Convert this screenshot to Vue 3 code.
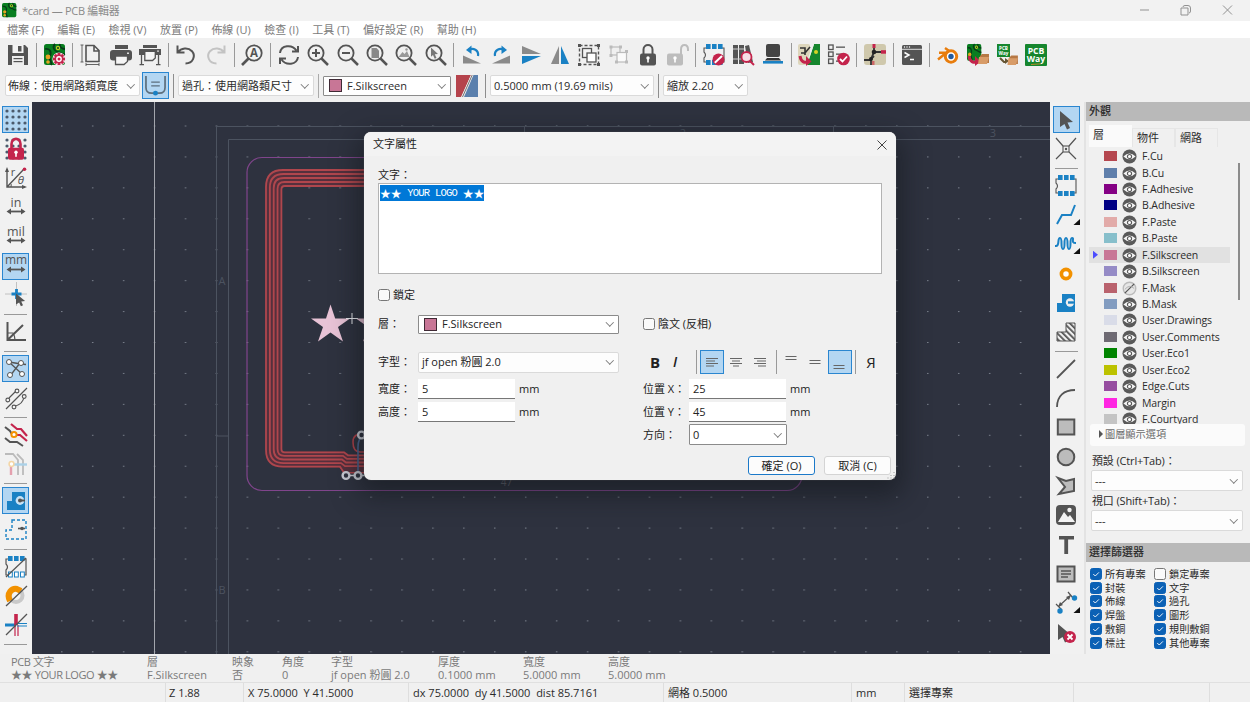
<script setup>
const D = '#545454', B = '#1a81c4', R = '#c4244c', O = '#f29100', G = '#16862e'
const ln = (d, c = D, w = 2, extra = '') => `<path d="${d}" fill="none" stroke="${c}" stroke-width="${w}" ${extra}/>`
const fl = (d, c = D) => `<path d="${d}" fill="${c}"/>`
const rc = (x, y, w, h, c = D, extra = '') => `<rect x="${x}" y="${y}" width="${w}" height="${h}" fill="${c}" ${extra}/>`
const ci = (x, y, r, c = D, extra = '') => `<circle cx="${x}" cy="${y}" r="${r}" fill="${c}" ${extra}/>`
const tx = (x, y, s, t, c = D, extra = '') => `<text x="${x}" y="${y}" font-size="${s}" fill="${c}" text-anchor="middle" ${extra}>${t}</text>`

const board =
  rc(0, 0, 21, 21, '#087e20', 'rx="2.5"') +
  ln('M1 5C5 4 8 7 6 12S9 17 7 21M11 0C8 3 10 7 14 8S18 11 21 10M16 0C15 3 18 5 21 5', '#083b18', 1.8) +
  ci(4, 13, 2.4, '#e5a321') + ci(4, 18, 1.8, '#e5a321') + ci(14, 4, 2.2, '#bccf25') + ci(14, 4, 1, '#083b18')
const lens = ci(9, 9, 7.6, 'none', `stroke="${D}" stroke-width="1.8"`) + ln('M14.5 14.5L21 21', D, 2.5)
const ban = ci(15.5, 15.5, 6, R) + ln('M11.8 18.8L19 12', '#fff', 2)
const pads = (x, y, c = B) => rc(x, y, 4.6, 5, c) + rc(x + 6, y, 4.6, 5, c) + rc(x + 12, y, 4.6, 5, c)
const hollow = (x, y) => [0, 6, 12].map(i => rc(x + i + .5, y + .5, 3.8, 5, '#fff', `stroke="${B}"`)).join('')
const footprint = ln('M3 4H1V8Q4 11 1 14V18H3M19 4H21V18H19', D, 1.1) + pads(3, 0) + pads(3, 16)
const folder = fl('M13 12L15 10H22V19H12Z', '#b67844') + fl('M12 13H22L20 20H11Z', '#d89c68')
const redArrow = ln('M2 12C3 18 6 19 11 18', R, 3) + fl('M8 12L13.500 17.500L8 22Z', R)
const poly = 'M7 1H21V20H1V11H7Z'
const arrows = (y) => ln(`M4 ${y}H18`, D, 1.8) + fl(`M1.500 ${y}L6 ${y - 3}V${y + 3}ZM20.500 ${y}L16 ${y - 3}V${y + 3}Z`)
const dots = [2, 8, 14, 20].flatMap(x => [2, 8, 14, 20].map(y => ci(x, y, 1.6, '#4b5a6c'))).join('')
const lockBody = (c) => rc(3, 9.5, 16, 12, c, 'rx="2"') + ci(11, 14, 1.7, '#fff') + rc(10.2, 14, 1.6, 4.5, '#fff')
const pointer = 'M5 2L18 13L12.5 13.5L15 19L12 20.5L9.5 15L5 18Z'
const corner = fl('M25 15V21H18.500Z', '#111')
const teeth = [0, 45, 90, 135].map(a => `<rect x="13.600" y="9" width="2.800" height="12" fill="${R}" transform="rotate(${a} 15 15)"/>`).join('')

const icons = {
  save: fl('M1 1H18L21 4V21H1Z') + rc(5.5, 1, 11, 8, '#f4f4f4') + rc(11, 2, 3.5, 5.5) + rc(5, 12, 12, 9, '#eee') + rc(6.5, 14, 9, 1.2) + rc(6.5, 17, 9, 1.2),
  setup: board + ci(15, 15, 6.6, '#f3e4e8') + teeth + ci(15, 15, 4.4, R) + ci(15, 15, 2.9, '#fff') + ci(15, 15, 1.5, R),
  page: ln('M6 1.5H14L19 6.5V17.5H6ZM14 1.5V7H19', D, 1.6) + ln('M2 1V18M.5 1H3.5M.5 18H3.5M6 20.5H19M6 19V22M19 19V22', D, .9),
  print: rc(5, 1, 13, 4) + rc(0, 6, 22, 10.5, D, 'rx="3"') + fl('M5 12H17V18L14 21H5Z', '#f5f5f5') + ln('M5.5 12H17.5V17.5L14 20.5H5.5Z', D, 1.3) + rc(17, 8.5, 2, 1.5, '#ddd'),
  plot: rc(4, 1, 14, 3) + rc(0, 5, 22, 6) + fl('M6 8H16V14L13.5 16.5H6Z', '#f5f5f5') + ln('M5.8 8V16.5H13.5L16.3 14V8M2.5 10V21M19.5 10V21M.5 20.7H5M17 20.7H21.5', D, 1.3) + rc(18, 6.5, 2, 1.2, '#ddd'),
  undo: ln('M2.500 1.500V8.500H9.500M3 8.200C6 4 13 3 17 7.2C21 12 18 19.5 10.5 19.500', D, 2),
  redo: ln('M19.500 1.500V8.500H12.500M19 8.200C16 4 9 3 5 7.2C1 12 4 19.5 11.5 19.500', '#c3c3c3', 2),
  find: ci(13, 9, 7.7, '#f4f4f4', `stroke="${D}" stroke-width="1.8"`) + ln('M7.5 14.5L1 21', D, 2.6) + tx(13, 13.2, 11.5, 'A', D, 'font-weight="700"'),
  refresh: ln('M2 9C3 1 14 0 18.5 6.5M20 2V7.5H14M20 13C19 21 8 22 3.5 15.5M2 20V14.5H8', D, 2),
  zin: lens + ln('M5 9H13M9 5V13', D, 2),
  zout: lens + ln('M5 9H13', D, 2),
  zfit: lens + fl('M5.5 4H10.5L13 6.5V14H5.5Z', '#898989'),
  zobj: lens + fl('M3.5 13L7.5 8L9.5 10L12 7L14.5 13Z', '#999') + ci(11.5, 5.5, 1.2, '#999'),
  zsel: lens + fl('M6 3.5L13 10L9.8 10.3L11.5 14L9.7 14.7L8 11L6 12.7Z', '#777'),
  rotl: fl('M2 11.500L20 19.5H2Z', '#8a8a8a') + ln('M17 12C18 6 12 3.500 8 6', B, 2.2) + fl('M5 6L10.500 1.500V10Z', B),
  rotr: fl('M20 11.500L2 19.5H20Z', '#8a8a8a') + ln('M5 12C4 6 10 3.500 14 6', B, 2.2) + fl('M17 6L11.500 1.500V10Z', B),
  flipv: fl('M2 2L21 10H2Z', '#8a8a8a') + fl('M2 12H21L2 20Z', B),
  fliph: fl('M10 2V20H2Z', '#8a8a8a') + fl('M12 2L20 20H12Z', B),
  group: rc(1.5, 1.5, 19, 19, 'none', `stroke="${D}" stroke-width="1.4" stroke-dasharray="3 2"`) + rc(0, 0, 3, 3) + rc(19, 0, 3, 3) + rc(0, 19, 3, 3) + rc(19, 19, 3, 3) + rc(4.5, 4.5, 9, 9, '#f4f4f4', `stroke="${D}" stroke-width="1.3"`) + rc(9, 9, 9, 9, '#fff', `stroke="${D}" stroke-width="1.3"`),
  ungroup: rc(3, 3, 9, 8, 'none', 'stroke="#bbb" stroke-width="1.2"') + rc(9, 8.5, 9.5, 9.5, '#fafafa', 'stroke="#bbb" stroke-width="1.2"') + rc(1.5, 1.5, 3, 3, '#bbb') + rc(11, 1.5, 3, 3, '#bbb') + rc(17, 16.5, 3, 3, '#bbb') + rc(1.5, 10, 3, 3, '#bbb') + rc(17, 6, 3, 3, '#bbb') + rc(7, 16.5, 3, 3, '#bbb'),
  lock: ln('M6.5 10V5.5C6.5 -.5 15.5 -.5 15.5 5.5V10', D, 2) + lockBody(D),
  unlock: ln('M14 10V5.5C14 -.5 21 -.5 21 5.5V7', '#bcbcbc', 2) + `<g transform="translate(-3 0)">${lockBody('#bcbcbc')}</g>`,
  fpedit: footprint + ban,
  fplib: rc(1, 1, 5, 19) + rc(7, 1, 5, 19) + fl('M13 2L17 1L21 18L16 19Z') + ln('M1 5H12M1 15H12', '#ccc', 1) + ci(14.5, 13, 5, '#f6dfe5', `stroke="${R}" stroke-width="1.8"`) + ln('M18 17L22 21', R, 2),
  chip: rc(4, 0, 14, 13, '#444', 'rx="2"') + fl('M5 14H17L19 16.500H3Z', '#333') + rc(1, 17, 20, 2.6, B),
  update: rc(0, 0, 12, 21, '#ddd6bc', 'rx="2"') + fl('M16 0H22V21H9Z', G) + ln('M15.500 0L8.500 21', '#eee', 1.2) + ln('M2 4H7V11M3 9H7L12 3', '#333', 1.6) + ci(18, 8, 2, '#d6d324') + redArrow,
  drc: [1, 8, 15].map(y => rc(.6, y, 4.5, 4.5, 'none', `stroke="${D}" stroke-width="1.3"`) + rc(8, y + 1.5, 9, 1.3)).join('') + ci(15.5, 15, 6.3, R) + ln('M12 15L14.5 17.5L19 12.5', '#fff', 1.8),
  ratsnest: rc(0, 0, 22, 21, '#cfc8ac', 'rx="3"') + ln('M10 0V8L7 15V21M10 8H22M0 16H7M7 15L10 12', '#333', 1.8) + ci(10, 8, 2.3, '#222') + ci(7, 15, 2, '#222') + rc(8.5, 0, 3, 4, R) + rc(17, 6.2, 5, 3.5, R) + rc(8, 17, 2.5, 4, '#c66'),
  console: rc(1, 1, 20, 20, D, 'rx="1.5"') + rc(1, 4.8, 20, 1, '#ddd') + ci(3.5, 3, .7, '#fff') + ci(6, 3, .7, '#fff') + ci(8.5, 3, .7, '#fff') + ln('M3.5 8.5L8 11L3.5 13.5M9 15.5H13', '#fff', 1.5),
  blender: ln('M1 15.5L12 6.5M2 8.8H12M8 4L15 9', '#e87d0d', 2.4) + ci(14, 12.5, 5.7, '#fff', 'stroke="#e87d0d" stroke-width="3"') + ci(14, 12.5, 2.7, '#215a9e'),
  bundle: `<g transform="scale(.68 .8)">${board}</g>` + redArrow + folder,
  wayfolder: rc(1, 0, 13, 13, G) + tx(7.5, 5.6, 4.6, 'PCB', '#fff', 'font-weight="700"') + tx(7.5, 10.8, 4.6, 'Way', '#fff', 'font-weight="700"') + ln('M4 14L8 18H10', '#653', 2) + fl('M9 14L13 17L9 20Z', '#653') + `<g transform="translate(1 2) scale(.95)">${folder}</g>`,
  way: rc(0, 0, 22, 22, G, 'rx="1"') + tx(11, 9.7, 8.6, 'PCB', '#fff', 'font-weight="700"') + tx(11, 17.9, 8.6, 'Way', '#fff', 'font-weight="700"') + ln('M6 20.5L16 19.8', '#df8a28', .8),

  grid: dots,
  gridlock: dots + ln('M6.5 10V6C6.5 -.8 15.5 -.8 15.5 6V10', R, 2.6) + `<g transform="translate(0 .3)">${lockBody(R)}</g>`,
  polar: ln('M2 2V20H20M2 20L19 2', D, 1.4) + fl('M0 5L2 0L4 5ZM17 18L22 20L17 22Z') + ci(19.5, 2.3, 1.8, R) + tx(8, 9, 11, 'r') + tx(16, 17, 11.5, 'θ', D, 'font-style="italic"') + ln('M6 20Q7 17 5 16', D, 1),
  inch: tx(11, 9.5, 12.5, 'in') + arrows(14.5),
  mil: tx(11, 9.5, 12.5, 'mil') + arrows(14.5),
  mm: tx(11, 9, 12, 'mm') + arrows(14.5),
  cursor: ln('M0 9H22M11.5 -3V21', '#b5b5b5', .8) + ln('M11.5 4V14M6.5 9H16.5', B, 2.8) + `<g transform="translate(7.500 7) scale(.7)">${fl(pointer)}</g>`,
  angle: ln('M2.5 1V19H21M2.5 19L18 4', D, 2) + ln('M3 12H8Q10 15 10 19', D, 1.2),
  rats: ln('M4 4L16 6L21 6.5M4 4L17 16M15 5L5 18', D, 1.3) + [[4, 4], [16, 5], [5, 17], [17, 16]].map(p => ci(p[0], p[1], 2.5, '#fff', `stroke="${D}"`)).join(''),
  curved: ln('M1 22L22 1M4 11L11 4M9.500 19.500Q18 17 19 10', D, 1.2) + [[2.8, 13], [12, 4], [9, 20], [19.2, 9.5]].map(p => ci(p[0], p[1], 1.9, '#f5f5f5', `stroke="${D}" stroke-width="1.1"`)).join(''),
  tracks: ln('M0 3L5 7L8 12M0 14L5 18H12L18 22', D, 2) + ln('M6 0L12 5H16L22 12M11 11H15L22 17', R, 2.2) + ci(9, 10.5, 2.6, '#fff', `stroke="${O}" stroke-width="2"`),
  trackdim: ln('M0 1H8L13 7V22M12 1L18 7V22', '#bbb', 1.8) + ln('M8 11.500H22', '#abd1e8', 2.4) + ln('M6 13V22', '#e4a0ae', 2.4) + ci(6.5, 11, 2.4, '#fff', 'stroke="#f4d6a5" stroke-width="1.5"'),
  zone: fl('M7 2H20V20H2V11H7Z', B) + ci(15, 10.5, 4.4, '#c8e2f5') + ln('M14 10.5H20', D, 2) + ci(15, 10.5, 2, D),
  zoneoutline: ln(poly, B, 1.4, 'stroke-dasharray="3 2"') + ln('M13 9.5H20', D, 1.6) + ci(17, 9.5, 1.8, D),
  fpoutline: ln('M3 3H1V8Q4 11 1 14V19H3M19 3H21V19H19', D, 1.2) + pads(3, 0) + hollow(3, 15.5) + ln('M1 21L21 2', D, 1.2),
  padfill: ci(11, 10.5, 6.5, 'none', 'stroke="#c9c9c9" stroke-width="4"') + ln('M5 16C1 8 7 3 12 4L16 6', O, 6) + ci(11, 10.5, 3, '#f4f4f4') + ln('M1 21L22 1', D, 1.3),
  trackfill: ln('M0 11H11', B, 3) + ln('M11 0V11', R, 3.6) + ln('M10 11V22M13 11V22', R, 1.2) + ln('M12 9.5H22M12 12H22', B, 1.2) + ln('M1 21L22 0', D, 1.2),

  select: fl(pointer),
  local: ln('M1 0L8 8M14 14L21 21M21 0L14 8M8 14L1 21', D, 1.2) + rc(8, 8, 6, 6, 'none', `stroke="${D}" stroke-width="1.1"`) + ci(11, 11, 1.2),
  footprint,
  route: ln('M2 20L7 11H16L20 1', B, 2) + corner,
  tune: ln('M0 13H1C5 13 2 5 5 5S5 16 8 16S8 5 11 5S11 16 14 16S14 5 17 5S15 10 21 10', B, 2) + corner,
  via: ci(11, 11, 4.6, '#fff', `stroke="${O}" stroke-width="3.7"`),
  fill: fl('M7 2H20V20H2V11H7Z', B) + ci(15, 10.5, 4.2, '#eee') + ln('M13 10.5H20', B, 2.4),
  keepout: `<defs><pattern id="hatch" width="4" height="4" patternUnits="userSpaceOnUse" patternTransform="rotate(-45)"><rect width="1.800" height="4" fill="${D}"/></pattern></defs><path d="M11 2H20V20H2V11H11Z" fill="url(#hatch)" stroke="${D}"/>`,
  line: ln('M2 20L20 2', D, 1.8),
  arc: ln('M2 20C2 9 9 3 20 3', D, 1.8),
  rect: rc(2.8, 3.5, 16.5, 15, '#bcbcbc', `stroke="${D}" stroke-width="2"`),
  circle: ci(11, 11, 8.3, '#bcbcbc', `stroke="${D}" stroke-width="2"`),
  polygon: `<path d="M3 3L11 6L19 4V16L4 19L10 12Z" fill="#bcbcbc" stroke="${D}" stroke-width="2"/>`,
  image: rc(1, 1, 20, 20, D, 'rx="4"') + fl('M3 18L9 8L13 13L15 11L20 18Z', '#f4f4f4') + ci(14.5, 6, 2.2, '#f4f4f4'),
  text: rc(4, 2, 15, 3.5) + rc(9.3, 2, 3.8, 18),
  textbox: rc(2.5, 3.5, 17, 15, '#bcbcbc', `stroke="${D}" stroke-width="2"`) + ln('M6 8H16M6 11H16M6 14H13', D, 1.4),
  dim: ln('M4 14L15 4M1 12L7 18M13 0L18 6', D, 1.2) + fl('M3 15L5 10L8 13ZM16 3L11 5L14 8Z') + ci(5, 19, 2.7, B) + ci(19.5, 6, 2.7, B) + corner,
  del: `<g transform="translate(-2 0)">${fl(pointer)}</g>` + ci(15, 15, 6, R) + ln('M12.5 12.5L17.5 17.5M17.5 12.5L12.5 17.5', '#fff', 1.8),
}

const menus = ['檔案 (F)', '編輯 (E)', '檢視 (V)', '放置 (P)', '佈線 (U)', '檢查 (I)', '工具 (T)', '偏好設定 (R)', '幫助 (H)']
const topTools = 'save | setup | page print plot | undo redo | find | refresh zin zout zfit zobj zsel | rotl rotr flipv fliph group ungroup lock unlock | fpedit fplib chip | update drc | ratsnest | console | blender bundle wayfolder way'.split(' ')
const leftTools = 'grid gridlock polar inch mil mm cursor | angle | rats curved | tracks trackdim | zone zoneoutline | fpoutline padfill trackfill |'.split(' ')
const rightTools = 'select local | footprint route tune via fill keepout | line arc rect circle polygon image text textbox dim del'.split(' ')
const active = ['grid', 'mm', 'rats', 'zone', 'select']

const layers = [
  ['F.Cu', '#b5474f'], ['B.Cu', '#5f7fab'], ['F.Adhesive', '#840084'], ['B.Adhesive', '#000084'],
  ['F.Paste', '#e2aba9'], ['B.Paste', '#87bfcb'], ['F.Silkscreen', '#c87696'], ['B.Silkscreen', '#958bc6'],
  ['F.Mask', '#b9626d'], ['B.Mask', '#829cc0'], ['User.Drawings', '#d9dce8'], ['User.Comments', '#6e6a73'],
  ['User.Eco1', '#008400'], ['User.Eco2', '#bcc200'], ['Edge.Cuts', '#964da0'], ['Margin', '#ff26e2'], ['F.Courtyard', '#c4c4c4'],
]
const filters = ['所有專案', '鎖定專案', '封裝', '文字', '佈線', '過孔', '焊盤', '圖形', '敷銅', '規則敷銅', '標註', '其他專案']
const info = [['PCB 文字', '★★ YOUR LOGO ★★'], ['層', 'F.Silkscreen'], ['映象', '否'], ['角度', '0'], ['字型', 'jf open 粉圓 2.0'], ['厚度', '0.1000 mm'], ['寬度', '5.0000 mm'], ['高度', '5.0000 mm']]
const status = ['', 'Z 1.88', 'X 75.0000  Y 41.5000', 'dx 75.0000  dy 41.5000  dist 85.7161', '網格 0.5000', 'mm', '選擇專案', '']

const coil = [0, 1, 2, 3, 4].map(i => {
  const a = 266 + i * 3.85, t = 170 + i * 4, b = 466.7 - i * 3.6, r = 17 - i * 3.4
  return `M400 ${t}H${a + r}Q${a} ${t} ${a} ${t + r}V${b - r}Q${a} ${b} ${a + r} ${b}H${340 + i}l4 ${i ? 3 : 6}H400`
})
</script>

<template>
  <div class="app">
    <header class="title">
      <svg class="logo" viewBox="0 0 22 22" v-html="board"></svg>
      <span>*card — PCB 編輯器</span>
      <svg class="winctl" viewBox="0 0 92 12"><path d="M1 6H10M42 4H49V11H42ZM44 3Q44 1.500 46 1.500H49Q51.500 1.500 51.500 4V7Q51.500 9 50 9M84 1.500L93 10.500M93 1.500L84 10.500" transform="translate(-1 0)" /></svg>
    </header>
    <nav class="menu"><span v-for="m in menus" :key="m">{{ m }}</span></nav>
    <div class="bar top">
      <template v-for="(t, i) in topTools" :key="i">
        <i v-if="t === '|'" class="vsep"></i>
        <span v-else class="tool"><svg viewBox="0 0 22 22" v-html="icons[t]"></svg></span>
      </template>
    </div>
    <div class="bar second">
      <div class="sel w1">佈線：使用網路類寬度<b class="chev"></b></div>
      <span class="autow"><svg viewBox="0 0 22 22"><path d="M1 1V13Q1 19 7 19H15Q21 19 21 13V1" fill="none" stroke="#5d6f7e" stroke-width="1.8" /><path d="M6.500 7.500H15.500M6.500 11.500H15.500" stroke="#5d6f7e" stroke-width="1.300" /><circle cx="11" cy="19" r="2.600" fill="#1a81c4" /></svg></span>
      <i class="vsep2"></i>
      <div class="sel w2">過孔：使用網路類尺寸<b class="chev"></b></div>
      <i class="vsep2 light"></i>
      <div class="sel w3 dark"><i class="chip"></i>F.Silkscreen<b class="chev"></b></div>
      <svg class="pair" viewBox="0 0 22 22"><path d="M0 0H15L5 22H0Z" fill="#b5434c" /><path d="M17 0H22V22H7Z" fill="#5b80ad" /><path d="M15 0H17.500L8 22H5.500Z" fill="#eee" /><path d="M16.200 0L6.500 22" stroke="#555" stroke-width=".8" /></svg>
      <i class="vsep2"></i>
      <div class="sel w4">0.5000 mm (19.69 mils)<b class="chev"></b></div>
      <i class="vsep2"></i>
      <div class="sel w5">縮放 2.20<b class="chev"></b></div>
    </div>

    <main>
      <aside class="side left">
        <template v-for="(t, i) in leftTools" :key="i">
          <i v-if="t === '|'" class="hsep"></i>
          <span v-else class="tool" :class="{ on: active.includes(t) }"><svg viewBox="0 0 22 22" v-html="icons[t]"></svg></span>
        </template>
      </aside>
      <svg class="canvas" viewBox="32 102 1018 552">
        <defs><pattern id="dots" x="61" y="125.500" width="30.930" height="30.930" patternUnits="userSpaceOnUse"><rect width="1.500" height="1" fill="#7b818d" /></pattern></defs>
        <rect x="32" y="102" width="1018" height="552" fill="#2e323f" />
        <rect x="32" y="102" width="1018" height="552" fill="url(#dots)" />
        <path d="M154.500 102V654" stroke="#a3a6ad" />
        <g class="frame">
          <path d="M216.500 654V126.500H1050M228.500 654V139.500H1050M216.500 436H228.500M524.500 126V139M833.500 126V139" />
          <text x="222" y="285">A</text><text x="222" y="594">B</text><text x="683" y="137">2</text><text x="993" y="137">3</text>
        </g>
        <rect x="247" y="157.500" width="555" height="333" rx="15" fill="none" stroke="#80458c" stroke-width="1.200" />
        <path d="M400 178H284Q273.700 178 273.700 188V449Q273.700 459.500 284 459.500H342L346 463H400" fill="none" stroke="#55303d" stroke-width="16" />
        <path v-for="d in coil" :key="d" :d="d" fill="none" stroke="#b0464d" stroke-width="1.800" />
        <path d="M364 434Q353 433 353 442Q353 452 360 452H370" fill="none" stroke="#ad4149" stroke-width="1.600" />
        <path d="M358 475V447Q358 438 364 435" fill="none" stroke="#49658f" stroke-width="1.600" />
        <path d="M346 475.500H364" stroke="#c9ccd5" stroke-width="1.500" />
        <g fill="#2e323f" stroke="#c9ccd5" stroke-width="2.400"><circle cx="346" cy="475.500" r="3.400" /><circle cx="358" cy="475.500" r="3.400" /><circle cx="361.500" cy="435" r="3.400" /></g>
        <path d="M330.500 304.500L335.200 318.500H350L338 327L343 341.500L330.500 332.500L318 341.500L323 327L311 318.500H326Z" fill="#e8c3d6" />
        <path transform="translate(45 0)" d="M330.500 304.500L335.200 318.500H350L338 327L343 341.500L330.500 332.500L318 341.500L323 327L311 318.500H326Z" fill="#e8c3d6" />
        <path d="M352 313V324M346 318.500H358" stroke="#e9e9ee" />
        <text x="506.500" y="486" class="net">47</text>
      </svg>
      <aside class="side right">
        <template v-for="(t, i) in rightTools" :key="i">
          <i v-if="t === '|'" class="hsep"></i>
          <span v-else class="tool" :class="{ on: active.includes(t) }"><svg viewBox="0 0 22 22" v-html="icons[t]"></svg></span>
        </template>
      </aside>
      <section class="panel">
        <h3>外觀</h3>
        <div class="tabs"><span class="cur">層</span><span>物件</span><span>網路</span></div>
        <div class="layers">
          <div class="list">
            <div v-for="l in layers" :key="l[0]" class="layer" :class="{ cur: l[0] === 'F.Silkscreen' }">
              <i class="mark"></i>
              <i class="swatch" :style="{ background: l[1] }"></i>
              <svg v-if="l[0] !== 'F.Mask'" class="eye" viewBox="0 0 16 16"><circle cx="8" cy="8" r="7.500" fill="#5a5a5a" /><path d="M1.500 8Q8 1.500 14.500 8Q8 14 1.500 8Z" fill="#f4f4f4" /><circle cx="8" cy="8" r="2.200" fill="#fff" stroke="#5a5a5a" stroke-width="1.200" /></svg>
              <svg v-else class="eye" viewBox="0 0 16 16"><circle cx="8" cy="8" r="6.700" fill="#e6e6e6" stroke="#bbb" stroke-width="1.500" /><path d="M3 13L13 3" stroke="#555" stroke-width="1.300" /><path d="M3 9Q8 3 13 8" stroke="#aaa" fill="none" /></svg>
              <span>{{ l[0] }}</span>
            </div>
          </div>
          <i class="thumb"></i>
        </div>
        <div class="opts"><i></i>圖層顯示選項</div>
        <label class="lab">預設 (Ctrl+Tab)：</label>
        <div class="sel ps">---<b class="chev"></b></div>
        <label class="lab two">視口 (Shift+Tab)：</label>
        <div class="sel ps">---<b class="chev"></b></div>
        <h3 class="second-h">選擇篩選器</h3>
        <div class="filters">
          <label v-for="f in filters" :key="f"><i class="cb" :class="{ ck: f !== '鎖定專案' }"><svg viewBox="0 0 11 11"><path d="M2.500 5.500L4.700 7.700L8.700 3.700" /></svg></i>{{ f }}</label>
        </div>
      </section>
    </main>

    <section class="info">
      <div v-for="(c, i) in info" :key="i"><span>{{ c[0] }}</span><span>{{ c[1] }}</span></div>
    </section>
    <footer><span v-for="(s, i) in status" :key="i">{{ s }}</span></footer>

    <div class="dialog">
      <div class="dhead">文字屬性<svg viewBox="0 0 10 10"><path d="M.5 .5L9.500 9.500M9.500 .5L.5 9.500" /></svg></div>
      <div class="dlabel">文字：</div>
      <div class="area"><mark><span>★★</span> YOUR LOGO <span>★★</span></mark></div>
      <div class="drow r1"><i class="cb big"></i>鎖定</div>
      <div class="drow r2">
        <span class="k">層：</span><div class="sel dark dl"><i class="chip"></i>F.Silkscreen<b class="chev"></b></div>
        <span class="right2"><i class="cb big"></i>陰文 (反相)</span>
      </div>
      <div class="drow r3">
        <span class="k">字型：</span><div class="sel df">jf open 粉圓 2.0<b class="chev"></b></div>
        <div class="fmt">
          <b>B</b><em>I</em><i class="ds"></i>
          <span class="on"><svg viewBox="0 0 22 22"><path d="M5 7.500H17M5 10H14M5 12.500H17M5 15H13" /></svg></span>
          <span><svg viewBox="0 0 22 22"><path d="M5 7.500H17M7 10H15M5 12.500H17M8 15H14" /></svg></span>
          <span><svg viewBox="0 0 22 22"><path d="M5 7.500H17M8 10H17M5 12.500H17M9 15H17" /></svg></span>
          <i class="ds"></i>
          <span><svg viewBox="0 0 22 22"><path d="M5.500 5.500H16.500M5.500 8.500H16.500" /></svg></span>
          <span><svg viewBox="0 0 22 22"><path d="M5.500 9.500H16.500M5.500 12.500H16.500" /></svg></span>
          <span class="on"><svg viewBox="0 0 22 22"><path d="M5.500 14.500H16.500M5.500 17.500H16.500" /></svg></span>
          <i class="ds"></i><strong>Я</strong>
        </div>
      </div>
      <div class="drow"><span class="k">寬度：</span><div class="inp">5</div><span class="u">mm</span><span class="k2">位置 X：</span><div class="inp">25</div><span class="u">mm</span></div>
      <div class="drow"><span class="k">高度：</span><div class="inp">5</div><span class="u">mm</span><span class="k2">位置 Y：</span><div class="inp">45</div><span class="u">mm</span></div>
      <div class="drow r6"><span class="k2">方向：</span><div class="sel dark dd">0<b class="chev"></b></div></div>
      <div class="btns"><button class="ok">確定 (O)</button><button>取消 (C)</button></div>
      <svg class="grip" viewBox="0 0 8 8"><path d="M7 1V2M7 4V5M7 6.500V7.500M4 4V5M4 6.500V7.500M1 6.500V7.500" stroke="#aaa" stroke-width="1.200" /></svg>
    </div>
  </div>
</template>

<style>
body { background: #f0f0f0; overflow: hidden; }
</style>
<style scoped>
.app { width: 1250px; height: 702px; position: relative; overflow: hidden; display: flex; flex-direction: column; background: #f0f0f0; font-family: "Open Sans", "Noto Sans CJK TC", sans-serif; font-size: 11px; color: #2b2b2b; line-height: 14px; white-space: pre; box-sizing: border-box; }
.app * { box-sizing: border-box; }
svg { display: block; flex: none; overflow: visible; }
i { font-style: normal; flex: none; }
.title { height: 21px; background: #f2f2f2; display: flex; align-items: center; padding: 0 18px 0 2px; color: #8a8a8a; gap: 5px; letter-spacing: -.3px; }
.logo { width: 15px; height: 15px; }
.winctl { width: 92px; height: 12px; margin-left: auto; margin-top: -2px; fill: none; stroke: #929292; }
.menu { height: 17px; background: #fff; display: flex; align-items: center; padding-left: 7px; gap: 13.500px; color: #7b7b7b; }
.bar { display: flex; align-items: center; }
.top { height: 34px; padding-left: 3.500px; }
.top .tool { width: 29.350px; flex: none; display: flex; justify-content: center; }
.tool svg { width: 22px; height: 22px; }
.vsep { width: 7.200px; height: 24px; background: linear-gradient(#999, #999) center / 1px 100% no-repeat; }
.second { height: 30px; padding-left: 5px; padding-bottom: 3px; }
.sel { height: 21px; background: #fdfdfd; border: 1px solid #dadada; border-radius: 2px; display: flex; align-items: center; padding: 0 7px 0 3px; flex: none; }
.sel.dark { border-color: #8b8b8b; background: #fff; border-radius: 1px; }
.chev { width: 5.500px; height: 5.500px; border-right: 1px solid #777; border-bottom: 1px solid #777; transform: translate(1px, -1.500px) rotate(45deg); margin-left: auto; flex: none; }
.w1 { width: 135px; padding-left: 2px; } .w2 { width: 136px; } .w3 { width: 128px; height: 20px; } .w4 { width: 164px; } .w5 { width: 85px; }
.autow { width: 27px; height: 27px; margin: 0 4px 0 2px; background: #b3d6f2; border: 1px solid #2a86d0; display: grid; place-items: center; flex: none; }
.autow svg { width: 21px; height: 21px; }
.vsep2 { width: 1px; height: 24px; background: #8d8d8d; margin-right: 4px; }
.vsep2.light { margin-left: 4px; background: #aaa; }
.chip { width: 13px; height: 13px; background: #c87696; border: 1px solid #402a35; margin: 0 5px 0 2px; }
.pair { width: 22px; height: 22px; margin: 0 7px 0 5px; }
.w4 { margin-right: 4px; }
main { display: flex; height: 552px; flex: none; }
.side { display: flex; flex-direction: column; align-items: center; padding-top: 4px; flex: none; background: #f1f1f1; }
.left { width: 32px; padding-right: 1px; }
.right { width: 36px; padding-right: 2px; border-right: 2px solid #e3e3e3; }
.side .tool { width: 27px; height: 27.400px; margin: 0 0 1.930px; display: grid; place-items: center; flex: none; }
.side .tool.on { background: #b3d6f2; border: 1px solid #2a86d0; }
.hsep { width: 23px; height: 7.300px; background: linear-gradient(#999, #999) center / 100% 1px no-repeat; }
.canvas { width: 1018px; height: 552px; }
.frame path { fill: none; stroke: #4c5360; stroke-width: 1; }
.frame text { fill: #4c5360; font-size: 11px; text-anchor: middle; }
.net { fill: #62646f; font-size: 10px; text-anchor: middle; }
.panel { width: 164px; display: flex; flex-direction: column; overflow: hidden; }
h3 { margin: 0; height: 19px; background: #b9b9b9; font-weight: 500; font-size: 11px; line-height: 18px; padding-left: 3px; flex: none; }
.tabs { display: flex; height: 24px; margin-top: 2px; padding-left: 3px; align-items: end; }
.tabs span { height: 19px; width: 43px; padding: 2px 0 0 4px; border: 1px solid #e6e6e6; border-bottom: 0; }
.tabs span.cur { height: 22px; padding-left: 3px; background: #fafafa; border-color: #fafafa; }
.layers { height: 277px; display: flex; overflow: hidden; flex: none; }
.list { width: 144px; padding: 1px 0 0 3px; }
.layer { height: 16.430px; display: flex; align-items: center; font-size: 10.500px; letter-spacing: -.1px; }
.layer.cur { background: #e1e1e1; }
.mark { width: 5px; height: 0; margin: 0 6px 0 4px; }
.cur .mark { height: 8px; background: #4d4dff; clip-path: polygon(0 0, 100% 50%, 0 100%); }
.swatch { width: 13px; height: 10px; margin-right: 5px; }
.eye { width: 15px; height: 15px; margin: 1px 5px 0 0; }
.thumb { width: 2px; height: 137px; background: #8b8b8b; margin: 16px 0 0 8px; }
.opts { height: 22px; margin: 0 5px 0 4px; background: #fbfbfb; border-radius: 3px; display: flex; align-items: center; color: #6b6b6b; padding: 0 0 2px 9px; font-size: 10.200px; }
.opts i { border-left: 4px solid #555; border-top: 4px solid transparent; border-bottom: 4px solid transparent; margin-right: 2px; }
.lab { margin: 8px 0 2px 6px; letter-spacing: -.15px; }
.lab.two { margin-top: 3px; }
.ps { height: 21px; width: 152px; margin-left: 5px; flex: none; }
.second-h { margin-top: 12px; }
.filters { display: grid; grid-template-columns: 64px 90px; grid-auto-rows: 13.750px; margin: 5px 0 0 4px; font-size: 10.200px; }
.filters label { display: flex; align-items: center; gap: 3px; }
.cb { width: 12px; height: 12px; border: 1px solid #777; border-radius: 2.500px; background: #fafafa; }
.cb svg { width: 10px; height: 10px; display: none; }
.cb.ck { background: #0b61b5; border-color: #0b61b5; }
.cb.ck svg { display: block; fill: none; stroke: #fff; stroke-width: 1; }
.info { height: 28px; display: grid; grid-template-columns: 136px 85px 50px 49px 107px 85px 85px 100px; padding-left: 11px; color: #7a7a7a; align-content: center; flex: none; }
.info div { display: flex; flex-direction: column; line-height: 13.500px; }
.info div:first-child { letter-spacing: -.4px; }
footer { height: 20px; display: grid; grid-template-columns: 166px 78px 165px 255px 188px 53px 169px 136px; border-top: 1px solid #e0e0e0; line-height: 20px; }
footer span { border-right: 1px solid #dedede; padding-left: 4px; }
footer span:nth-child(2) { padding-left: 3px; }
.dialog { position: absolute; left: 364px; top: 132px; width: 532px; height: 348px; background: #f0f0f0; border-radius: 7px; box-shadow: 0 0 1px #777, 0 10px 26px 6px rgba(15, 20, 24, .5); overflow: visible; display: flex; flex-direction: column; color: #222; }
.dhead { height: 36px; background: linear-gradient(#f3f3f3, #f3f3f3) top / 100% 24px no-repeat; border-radius: 7px 7px 0 0; padding: 5px 9px 0; display: flex; }
.dhead svg { width: 10px; height: 10px; margin: 3px 0 0 auto; stroke: #444; fill: none; }
.dlabel { height: 15px; padding-left: 14px; }
.area { margin: 0 14px; height: 91px; flex: none; border: 1px solid #b3b3b3; background: #fff; padding: 1px; }
mark { display: flex; width: max-content; height: 16px; line-height: 16px; background: #0078d7; color: #fff; font-family: "Liberation Mono", monospace; font-size: 10.500px; letter-spacing: -.75px; }
mark span { font-family: "Noto Sans CJK TC", sans-serif; font-size: 10.800px; letter-spacing: 0; }
.drow { height: 23px; padding-left: 14px; display: flex; align-items: center; flex: none; }
.r1 { height: 20px; margin-top: 11px; }
.big { margin-right: 3px; }
.r2 { margin-top: 8px; height: 22px; }
.r3 { margin-top: 15px; height: 24px; margin-bottom: 3px; }
.k { width: 40px; flex: none; } .k2 { width: 46px; flex: none; }
.dl { width: 201px; height: 19px; }
.df { width: 201px; }
.right2 { display: flex; align-items: center; margin-left: 24px; }
.inp { width: 97px; height: 20px; background: #fff; border-bottom: 1px solid #777; padding: 3px 4px; flex: none; }
.u { padding-left: 4px; width: 128px; flex: none; }
.r6 { padding-left: 279px; }
.dd { width: 98px; }
.fmt { display: flex; align-items: center; margin-left: 31px; margin-top: -1px; }
.fmt b { font-size: 15px; width: 23px; } .fmt em { font-size: 14px; width: 20px; font-weight: 600; }
.fmt span { width: 24.200px; height: 24px; border: 1px solid transparent; }
.fmt span svg { width: 22px; height: 22px; stroke: #666; stroke-width: 1; margin-left: -.5px; }
.fmt span.on { background: #b3d6f2; border-color: #2a86d0; }
.ds { width: 1px; height: 24px; background: #999; margin: 0 3px; }
.fmt strong { font-size: 15px; font-weight: 400; margin-left: 7px; }
.btns { display: flex; gap: 9px; justify-content: flex-end; padding: 10px 5px 0 0; }
button { width: 67px; height: 19px; padding: 0; font: inherit; color: #222; background: #fcfcfc; border: 1px solid #d4d4d4; border-radius: 3px; line-height: 15px; }
.ok { border-color: #1b79c9; }
.grip { position: absolute; right: 1px; bottom: 1px; width: 8px; height: 8px; }
</style>
